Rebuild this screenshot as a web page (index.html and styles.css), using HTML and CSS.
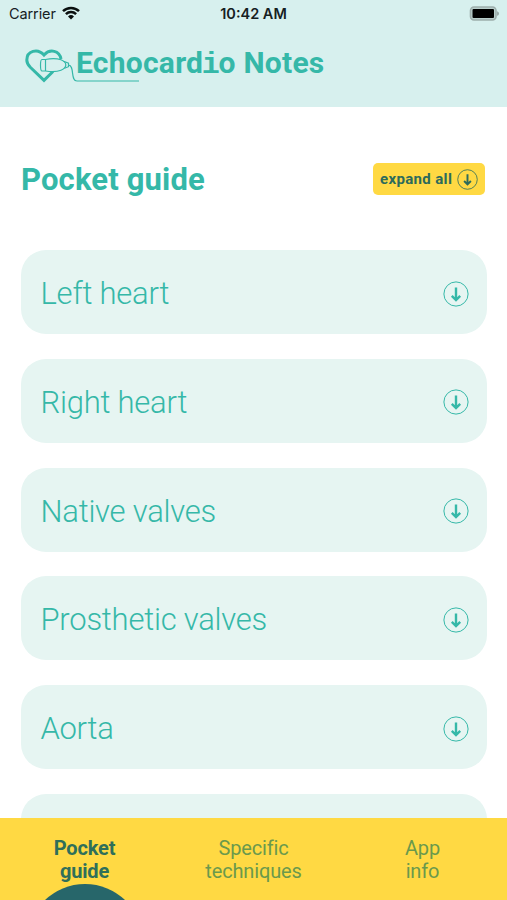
FILE: index.html
```html
<!DOCTYPE html>
<html lang="en">
  <head>
    <meta charset="UTF-8" />
    <meta name="viewport" content="width=device-width, initial-scale=1.0" />
    <title>Echocardio Notes</title>
    <link rel="stylesheet" href="styles.css">
  </head>
  <body>
    <!-- Arrow icon shared by the button and the cards -->
    <svg class="sprite">
      <symbol id="arrow" viewBox="0 0 26 26">
        <circle cx="13" cy="13" r="12.1" fill="none" stroke="currentColor" stroke-width="1" />
        <path d="M13 6.500V19M8.800 14.800l4.200 4.200 4.200-4.200" fill="none" stroke="currentColor" stroke-width="2.400" />
      </symbol>
    </svg>

    <div class="app">
      <header class="header">
        <div class="status-bar">
          <div class="carrier">
            <span>Carrier</span>
            <svg class="wifi" viewBox="0 0 18 14">
              <path d="M1 5.2a11.500 11.500 0 0 1 16 0M3.900 8.200a7.300 7.300 0 0 1 10.200 0" fill="none" stroke="#0a0f0e" stroke-width="2.500" />
              <path d="M6 10.400a4.300 4.300 0 0 1 6 0L9 13.400z" fill="#0a0f0e" />
            </svg>
          </div>
          <div class="time">10:42 AM</div>
          <div class="status-right">
            <svg class="battery" viewBox="0 0 31 15">
              <rect x="1.500" y="1" width="25.500" height="13" rx="3.500" fill="#b9cfcc" stroke="#9daeac" stroke-width="1.600" />
              <rect x="3.500" y="3" width="21.500" height="9" rx="1" fill="#000" />
              <path d="M28.200 5.200c2.200.9 2.200 3.700 0 4.600z" fill="#8d9c9a" />
            </svg>
          </div>
        </div>
        <div class="brand">
          <!-- Heart with the ultrasound probe and its cable -->
          <svg class="logo" viewBox="0 0 116 36">
            <path d="M36 11C34.500 2.500 25 .5 19 7 12.500-.2 1.800 3 1.800 12c0 3 1.500 5.300 3.500 7.300L19 32.300 28 23.500" fill="none" stroke="#35b8a8" stroke-width="3" />
            <path d="M17 11.500h3.500c5.500-1.200 11-1.300 15.500.3 2.500 1 4.800 3.200 4.800 5.200s-2.300 4.200-4.800 5.200c-4.500 1.800-10 1.700-15.500.8H17c-2 0-2-11.500 0-11.500z" fill="#d7f0ee" stroke="#35b8a8" stroke-width="1.200" />
            <path d="M20.500 11.500V23M38.500 13.300l5 1.900v3.500l-4 1.600M43.500 17c6.500.5 1.500 16 8.500 16h62" fill="none" stroke="#35b8a8" stroke-width="1.200" />
          </svg>
          <div class="brand-name">Echocard<span class="slab">i</span>o Notes</div>
        </div>
      </header>

      <main class="content">
        <div class="title-row">
          <h1>Pocket guide</h1>
          <button class="expand">
            <span>expand all</span>
            <svg><use href="#arrow" /></svg>
          </button>
        </div>

        <div class="card"><span>Left heart</span><svg><use href="#arrow" /></svg></div>
        <div class="card"><span>Right heart</span><svg><use href="#arrow" /></svg></div>
        <div class="card"><span>Native valves</span><svg><use href="#arrow" /></svg></div>
        <div class="card"><span>Prosthetic valves</span><svg><use href="#arrow" /></svg></div>
        <div class="card"><span>Aorta</span><svg><use href="#arrow" /></svg></div>
        <div class="card"></div>
      </main>

      <nav class="tabs">
        <a class="tab active">Pocket<br>guide</a>
        <a class="tab">Specific<br>techniques</a>
        <a class="tab">App<br>info</a>
      </nav>
    </div>
  </body>
</html>
```
FILE: styles.css
```css
* {
  box-sizing: border-box;
}
body {
  margin: 0;
  font-family: Roboto, "Liberation Sans", sans-serif;
  background: #fff;
}
.sprite {
  display: none;
}
.app {
  display: flex;
  flex-direction: column;
  height: 900px;
  overflow: hidden;
}
.header {
  flex: none;
  height: 107px;
  background: #d7f0ee;
}
.status-bar {
  display: grid;
  grid-template-columns: 1fr auto 1fr;
  align-items: center;
  height: 27px;
  padding: 0 7px 0 9px;
  font-family: Inter, sans-serif;
  font-size: 14.5px;
  color: #16201f;
}
.carrier {
  display: flex;
  align-items: center;
  gap: 6px;
  letter-spacing: -0.1px;
}
.wifi {
  width: 18px;
  height: 14px;
  margin-top: -1px;
}
.time {
  margin-left: -2px;
  font-weight: 600;
}
.status-right {
  display: flex;
  justify-content: flex-end;
}
.battery {
  width: 31px;
  height: 15px;
}
.brand {
  display: flex;
  align-items: flex-start;
  padding: 21px 0 0 25px;
}
.logo {
  flex: none;
  width: 116px;
  height: 36px;
  margin-right: -65px;
}
.brand-name {
  font-size: 30px;
  font-weight: 700;
  line-height: 30px;
  letter-spacing: 0.25px;
  white-space: nowrap;
  color: #35b8a8;
}
.slab {
  margin: 0 -1.5px;
  font-family: "Liberation Mono", monospace;
}
.content {
  flex: 1;
  min-height: 0;
  overflow: hidden;
  padding: 56px 20px 0 21px;
}
.title-row {
  display: flex;
  justify-content: space-between;
  align-items: center;
  height: 32px;
  margin-bottom: 55px;
  padding-right: 2px;
}
h1 {
  margin: 0;
  font-size: 31px;
  font-weight: 700;
  letter-spacing: 0.15px;
  color: #35b8a8;
}
.expand {
  display: flex;
  align-items: center;
  justify-content: space-between;
  width: 112px;
  height: 32px;
  padding: 0 7px;
  border: none;
  border-radius: 5px;
  background: #ffd943;
  color: #2c6b5c;
  font-family: inherit;
  font-size: 15px;
  font-weight: 700;
  letter-spacing: 0.35px;
  white-space: nowrap;
}
.expand svg {
  width: 21px;
  height: 21px;
}
.card {
  display: flex;
  justify-content: space-between;
  align-items: center;
  height: 84px;
  margin-bottom: 24.8px;
  padding: 3px 18.5px 0 19.5px;
  border-radius: 25px;
  background: #e6f5f2;
  color: #35b8a8;
  font-size: 31px;
  font-weight: 300;
  letter-spacing: -0.24px;
}
.card svg {
  width: 26px;
  height: 26px;
}
.tabs {
  position: relative;
  flex: none;
  display: grid;
  grid-template-columns: repeat(3, 1fr);
  height: 82px;
  padding-top: 18.5px;
  overflow: hidden;
  background: #ffd943;
}
.tab {
  text-align: center;
  font-size: 20px;
  line-height: 23px;
  letter-spacing: -0.15px;
  color: #6b994c;
}
.tab.active {
  font-weight: 700;
  color: #2f6f5a;
}
/* Round marker rising from the bottom edge under the active tab */
.tab.active::after {
  content: "";
  position: absolute;
  top: 66px;
  left: 27px;
  width: 116px;
  height: 116px;
  border-radius: 50%;
  background: #27666a;
}
```
